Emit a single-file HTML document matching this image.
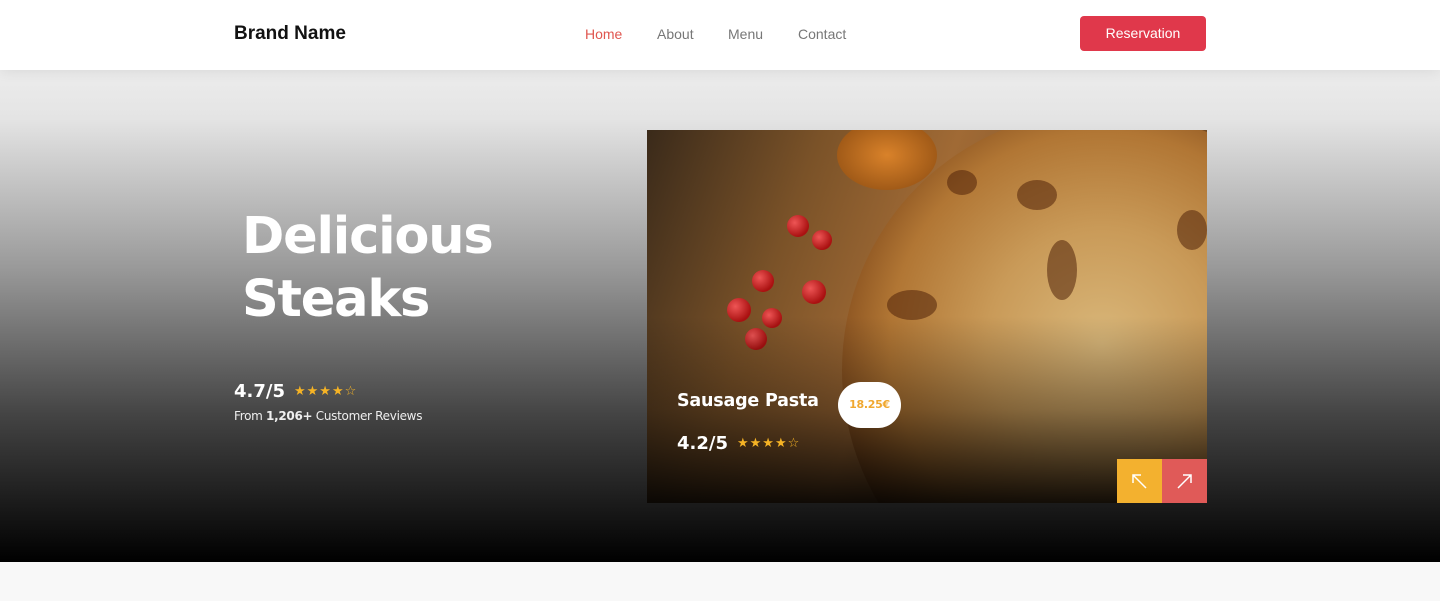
<!DOCTYPE html>
<html><head><style>
*{margin:0;padding:0;box-sizing:border-box}
body{width:1440px;height:601px;overflow:hidden;font-family:"Liberation Sans",sans-serif;background:#f8f8f8;position:relative}
.nav{position:absolute;top:0;left:0;width:1440px;height:70px;background:#fff;box-shadow:0 2px 12px rgba(0,0,0,.08);z-index:2}
.brand{position:absolute;left:234px;top:23px;font-size:19px;font-weight:bold;color:#111}
.links a{position:absolute;top:26px;font-size:14px;color:#777;text-decoration:none}
.btn{position:absolute;left:1080px;top:16px;width:126px;height:35px;background:#e0384b;color:#fff;border-radius:4px;font-size:14px;text-align:center;line-height:35px}
.hero{position:absolute;top:70px;left:0;width:1440px;height:492px;background:linear-gradient(#ececec 0%,#e4e4e4 10%,#9a9a9a 40%,#444 70%,#000 100%)}
h1{position:absolute;left:242px;top:205px;font-family:"DejaVu Sans",sans-serif;font-size:51px;line-height:63px;color:#fff;font-weight:bold;letter-spacing:-1.2px}
.r{position:absolute;left:234px;top:381px;color:#fff;font-family:"DejaVu Sans",sans-serif;font-weight:bold;font-size:18px}
.st{color:#f5b325;font-size:13px;margin-left:9px;letter-spacing:1px;vertical-align:2px}
.sub{position:absolute;left:234px;top:409px;color:#eee;font-family:"DejaVu Sans",sans-serif;font-size:12px;letter-spacing:-.3px}
.card{position:absolute;left:647px;top:130px;width:560px;height:373px;overflow:hidden;
background:linear-gradient(110deg,#3a2a1a 0%,#7a5228 25%,#a06a35 45%,#5a3a1c 100%)}
.pizza{position:absolute;left:195px;top:-20px;width:520px;height:520px;border-radius:50%;background:radial-gradient(circle at 50% 45%,#d9b77a 0%,#c99a58 30%,#b17634 55%,#7a4418 74%,#4a2810 78%)}
.spot{position:absolute;border-radius:50%;background:rgba(80,35,10,.55)}
.card .shade{position:absolute;inset:0;background:linear-gradient(transparent 50%,rgba(0,0,0,.35) 75%,rgba(0,0,0,.9) 100%)}
.tom{position:absolute;border-radius:50%;background:radial-gradient(circle at 35% 35%,#e55,#a11 70%)}
.cn{position:absolute;left:677px;top:391px;color:#fff;font-family:"DejaVu Sans",sans-serif;font-weight:bold;font-size:17.5px;letter-spacing:-.2px}
.price{position:absolute;left:838px;top:382px;width:63px;height:46px;border-radius:23px;background:#fff;color:#f0a830;font-family:"DejaVu Sans",sans-serif;font-weight:bold;font-size:11px;text-align:center;line-height:46px;letter-spacing:-.3px}
.cr{position:absolute;left:677px;top:433px;color:#fff;font-family:"DejaVu Sans",sans-serif;font-weight:bold;font-size:18px}
.a1,.a2{position:absolute;top:459px;width:45px;height:44px}
.a1{left:1117px;background:#f3b12f}.a2{left:1162px;background:#e05a58}
.a1 svg,.a2 svg{position:absolute;left:14px;top:14px}
</style></head><body>
<div class="nav"><div class="brand">Brand Name</div>
<div class="links"><a style="left:585px;color:#e0564f">Home</a><a style="left:657px">About</a><a style="left:728px">Menu</a><a style="left:798px">Contact</a></div>
<div class="btn">Reservation</div></div>
<div class="hero"></div>
<h1>Delicious<br>Steaks</h1>
<div class="r">4.7/5<span class="st">★★★★☆</span></div>
<div class="sub">From <b>1,206+</b> Customer Reviews</div>
<div class="card">
<div class="pizza"></div>
<div class="spot" style="left:370px;top:50px;width:40px;height:30px"></div>
<div class="spot" style="left:400px;top:110px;width:30px;height:60px"></div>
<div class="spot" style="left:240px;top:160px;width:50px;height:30px"></div>
<div class="spot" style="left:530px;top:80px;width:30px;height:40px"></div>
<div class="spot" style="left:300px;top:40px;width:30px;height:25px"></div>
<div class="tom" style="left:140px;top:85px;width:22px;height:22px"></div>
<div class="tom" style="left:165px;top:100px;width:20px;height:20px"></div>
<div class="tom" style="left:105px;top:140px;width:22px;height:22px"></div>
<div class="tom" style="left:80px;top:168px;width:24px;height:24px"></div>
<div class="tom" style="left:115px;top:178px;width:20px;height:20px"></div>
<div class="tom" style="left:155px;top:150px;width:24px;height:24px"></div>
<div class="tom" style="left:98px;top:198px;width:22px;height:22px"></div>
<div style="position:absolute;left:190px;top:-10px;width:100px;height:70px;border-radius:50%;background:radial-gradient(#d9822a,#8a4a10)"></div>
<div class="shade"></div></div>
<div class="cn">Sausage Pasta</div>
<div class="price">18.25€</div>
<div class="cr">4.2/5<span class="st">★★★★☆</span></div>
<div class="a1"><svg width="17" height="17" viewBox="0 0 17 17" fill="none" stroke="#fff" stroke-width="1.5"><path d="M15 15L2 2M2 10V2h8"/></svg></div>
<div class="a2"><svg width="17" height="17" viewBox="0 0 17 17" fill="none" stroke="#fff" stroke-width="1.5"><path d="M2 15L15 2M7 2h8v8"/></svg></div>
</body></html>
